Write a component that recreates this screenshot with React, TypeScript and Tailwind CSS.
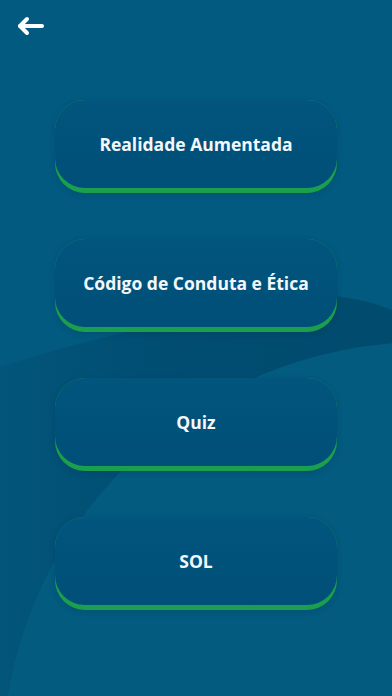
import React from 'react';

const items = ['Realidade Aumentada', 'Código de Conduta e Ética', 'Quiz', 'SOL'];

const Backdrop: React.FC = () => (
  <svg className="absolute inset-0 h-full w-full" viewBox="0 0 392 696" preserveAspectRatio="none">
    <defs>
      <linearGradient id="band" x1="0" y1="0" x2="1" y2="0">
        <stop offset="0" stopColor="#03557a" />
        <stop offset="0.45" stopColor="#004d71" />
        <stop offset="1" stopColor="#004b6e" />
      </linearGradient>
    </defs>
    <rect width="392" height="696" fill="#025a80" />
    <path d="M0 367 Q150 318 336 296 Q368 300 392 310 L392 696 L0 696 Z" fill="url(#band)" />
    <circle cx="425" cy="765" r="423" fill="#035b80" />
  </svg>
);

const MenuButton: React.FC<{ label: string }> = ({ label }) => (
  <button className="w-full rounded-[30px] bg-[#1a9f4e] pb-[5px] shadow-[0_2px_6px_rgba(0,0,0,0.12)]">
    <div className="flex h-[88px] items-center justify-center rounded-[30px] bg-gradient-to-b from-[#02557d] to-[#004f78]">
      <span className="text-[17.5px] font-bold text-[#f4f8fb] [font-family:'Open_Sans',sans-serif]">{label}</span>
    </div>
  </button>
);

export default function App() {
  return (
    <div className="relative h-[696px] w-full overflow-hidden bg-[#025a80]">
      <Backdrop />
      <div className="relative flex flex-col">
        <div className="h-[52px] pl-[16px] pt-[15px]">
          <svg width="30" height="22" viewBox="0 0 30 22" fill="none" stroke="#ffffff" strokeWidth="4" strokeLinecap="round" strokeLinejoin="round">
            <path d="M26 11H4" />
            <path d="M11 4L4 11L11 18" />
          </svg>
        </div>
        <div className="flex flex-col gap-[46px] px-[55px] pt-[48px]">
          {items.map((label) => (
            <MenuButton key={label} label={label} />
          ))}
        </div>
      </div>
    </div>
  );
}
